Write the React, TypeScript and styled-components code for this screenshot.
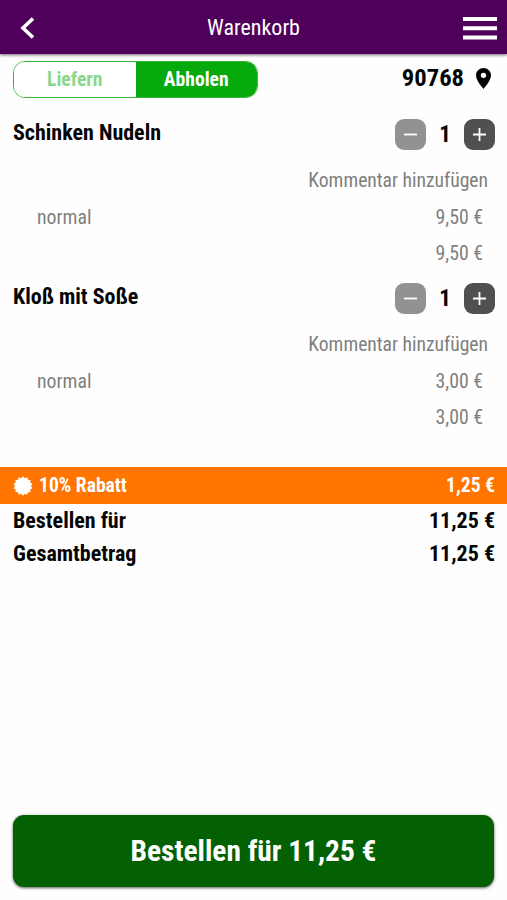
import React from "react";
import styled, { createGlobalStyle } from "styled-components";

const GlobalStyle = createGlobalStyle`
  * { box-sizing: border-box; }
  body { margin: 0; background: #fefefe; }
  button { font: inherit; border: 0; padding: 0; cursor: pointer; }
`;

const Page = styled.div`
  display: flex;
  flex-direction: column;
  width: 100%;
  height: 900px;
  overflow: hidden;
  background: #fefefe;
  color: #050505;
  font-family: "Roboto Condensed", Roboto, sans-serif;
  font-stretch: 75%;
`;

const Label = styled.span<{ $size: number; $bold?: boolean }>`
  font-size: ${(p) => p.$size}px;
  font-weight: ${(p) => (p.$bold ? 700 : 400)};
  line-height: 1;
  white-space: nowrap;
`;

const Header = styled.header`
  display: grid;
  grid-template-columns: 60px 1fr 60px;
  align-items: center;
  flex: none;
  height: 54px;
  background: #4e005b;
  color: #fff;
  text-align: center;
  box-shadow: 0 1px 3px rgba(0, 0, 0, 0.6);
`;

const Title = styled.h1`
  display: flex;
  justify-content: center;
  margin: 0;
  padding-top: 1px;
`;

const IconButton = styled.button<{ $end?: boolean }>`
  display: flex;
  justify-content: ${(p) => (p.$end ? "flex-end" : "flex-start")};
  padding: ${(p) => (p.$end ? "2px 10px 0 0" : "2px 0 0 20px")};
  background: none;
  color: inherit;
`;

const Delivery = styled.div`
  display: flex;
  align-items: center;
  justify-content: space-between;
  flex: none;
  height: 37px;
  margin: 7px 16px 21px 13px;
`;

const Toggle = styled.div`
  display: flex;
  width: 245px;
  height: 37px;
  border: 1px solid #38b838;
  border-radius: 12px;
  overflow: hidden;
`;

const Choice = styled.button<{ $active?: boolean }>`
  flex: 1;
  background: ${(p) => (p.$active ? "#06aa0d" : "#fff")};
  color: ${(p) => (p.$active ? "#fff" : "#8cd58c")};
`;

const Postcode = styled.div`
  display: flex;
  align-items: center;
  gap: 12px;
  height: 35px;
  align-self: flex-start;
`;

const Item = styled.section`
  flex: none;
  height: 164px;
  padding: 0 12px 0 13px;
`;

const ItemHead = styled.div`
  display: flex;
  justify-content: space-between;
  height: 44px;
`;

const ItemName = styled.h2`
  display: flex;
  margin: 0;
  padding-top: 3px;
`;

const Stepper = styled.div`
  display: flex;
  align-items: center;
  height: 31px;
`;

const Count = styled.div`
  width: 38px;
  text-align: center;
`;

const StepButton = styled.button<{ $muted?: boolean }>`
  display: grid;
  place-items: center;
  width: 31px;
  height: 31px;
  border-radius: 9px;
  background: ${(p) => (p.$muted ? "#929292" : "#505050")};
  color: #fff;
`;

const Line = styled.div<{ $inset: number; $height: number }>`
  display: flex;
  align-items: center;
  justify-content: flex-end;
  height: ${(p) => p.$height}px;
  padding: 0 ${(p) => p.$inset}px 0 24px;
  color: #7f7f7f;
`;

const OptionName = styled.div`
  display: flex;
  margin-right: auto;
`;

const Discount = styled.div`
  display: flex;
  align-items: center;
  flex: none;
  gap: 6px;
  height: 37px;
  margin-top: 20px;
  padding: 1px 12px 0 13px;
  background: #ff7500;
  color: #fff;
`;

const Amount = styled.div`
  margin-left: auto;
  display: flex;
`;

const Total = styled.div`
  display: flex;
  align-items: center;
  flex: none;
  height: 33px;
  padding: 0 12px 0 13px;
`;

const OrderButton = styled.button`
  flex: none;
  height: 72px;
  margin: auto 13px 13px;
  padding-top: 2px;
  border-radius: 11px;
  background: #036003;
  color: #fff;
  box-shadow: 0 1px 3px rgba(0, 0, 0, 0.65);
`;

const burst = Array.from({ length: 28 }, (_, i) => {
  const radius = i % 2 ? 7.9 : 9.8;
  const angle = (i * Math.PI) / 14;
  return `${10 + radius * Math.sin(angle)},${10 - radius * Math.cos(angle)}`;
}).join(" ");

const items = [
  { name: "Schinken Nudeln", price: "9,50 €" },
  { name: "Kloß mit Soße", price: "3,00 €" },
];

export default function App() {
  return (
    <Page>
      <GlobalStyle />
      <Header>
        <IconButton aria-label="Zurück">
          <svg width="15" height="22" viewBox="0 0 15 22" fill="none" stroke="currentColor" strokeWidth="3.6">
            <path d="M13 1.5 3 11l10 9.5" />
          </svg>
        </IconButton>
        <Title><Label $size={22}>Warenkorb</Label></Title>
        <IconButton $end aria-label="Menü">
          <svg width="34" height="23" viewBox="0 0 34 23" fill="currentColor">
            <path d="M0 0h34v4H0zM0 9.3h34v4H0zM0 18.6h34v4H0z" />
          </svg>
        </IconButton>
      </Header>
      <Delivery>
        <Toggle>
          <Choice><Label $size={19.6} $bold>Liefern</Label></Choice>
          <Choice $active><Label $size={19.6} $bold>Abholen</Label></Choice>
        </Toggle>
        <Postcode>
          <Label $size={24.6} $bold>90768</Label>
          <svg width="15" height="21" viewBox="5 2 14 20" preserveAspectRatio="none" fill="currentColor">
            <path d="M12 2C8.13 2 5 5.13 5 9c0 5.25 7 13 7 13s7-7.75 7-13c0-3.87-3.13-7-7-7zm0 9.5a2.5 2.5 0 1 1 0-5 2.5 2.5 0 0 1 0 5z" />
          </svg>
        </Postcode>
      </Delivery>
      {items.map((item) => (
        <Item key={item.name}>
          <ItemHead>
            <ItemName><Label $size={22} $bold>{item.name}</Label></ItemName>
            <Stepper>
              <StepButton $muted aria-label="Weniger">
                <svg width="13" height="13" stroke="currentColor" strokeWidth="1.8"><path d="M0 6.5h13" /></svg>
              </StepButton>
              <Count><Label $size={23} $bold>1</Label></Count>
              <StepButton aria-label="Mehr">
                <svg width="13" height="13" stroke="currentColor" strokeWidth="1.8"><path d="M0 6.5h13M6.5 0v13" /></svg>
              </StepButton>
            </Stepper>
          </ItemHead>
          <Line $inset={7} $height={36}><Label $size={19.6}>Kommentar hinzufügen</Label></Line>
          <Line $inset={12} $height={37}>
            <OptionName><Label $size={19.8}>normal</Label></OptionName>
            <Label $size={19.8}>{item.price}</Label>
          </Line>
          <Line $inset={12} $height={35}><Label $size={19.8}>{item.price}</Label></Line>
        </Item>
      ))}
      <Discount>
        <svg width="20" height="20" viewBox="0 0 20 20" fill="currentColor"><polygon points={burst} /></svg>
        <Label $size={19.6} $bold>10% Rabatt</Label>
        <Amount><Label $size={19.6} $bold>1,25 €</Label></Amount>
      </Discount>
      <Total><Label $size={22} $bold>Bestellen für</Label><Amount><Label $size={22} $bold>11,25 €</Label></Amount></Total>
      <Total><Label $size={22} $bold>Gesamtbetrag</Label><Amount><Label $size={22} $bold>11,25 €</Label></Amount></Total>
      <OrderButton><Label $size={29.4} $bold>Bestellen für 11,25 €</Label></OrderButton>
    </Page>
  );
}
